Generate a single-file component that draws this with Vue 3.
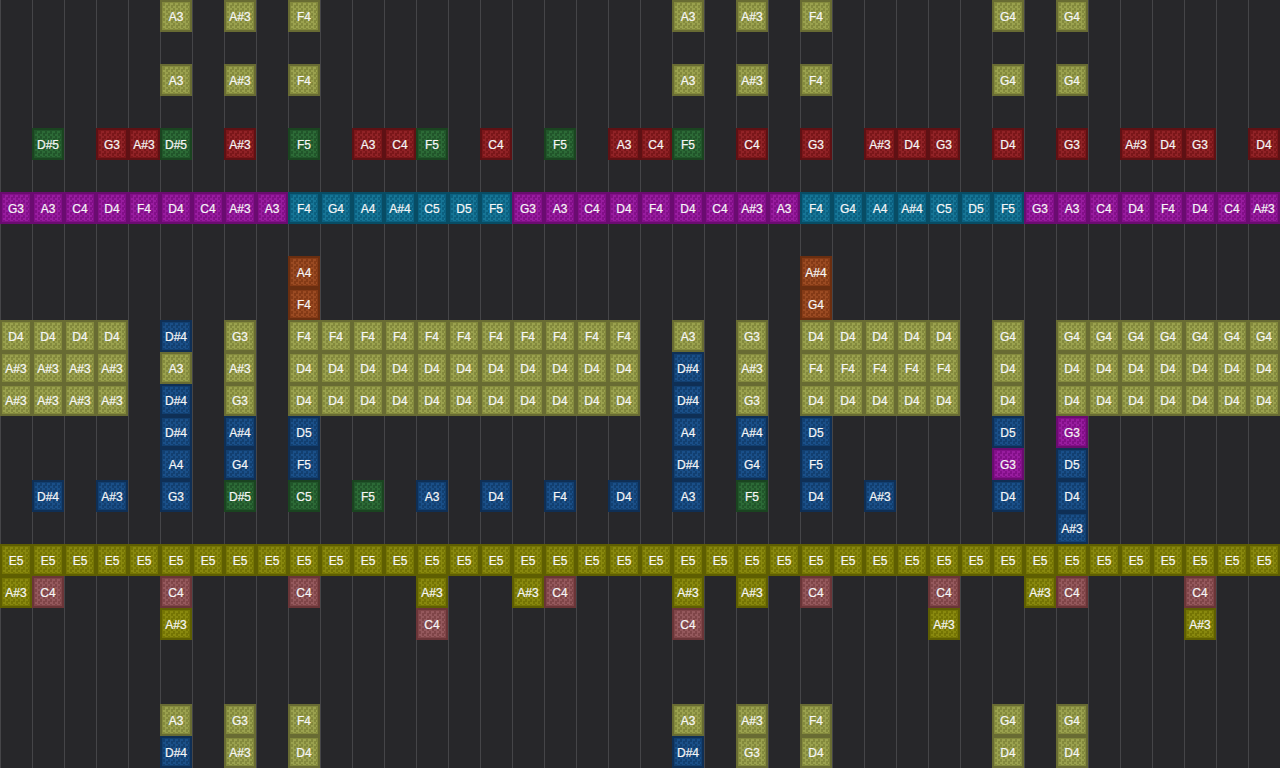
<script setup>
const olive = 'olive', blue = 'blue', green = 'green', red = 'red', purple = 'purple', teal = 'teal', orange = 'orange', yellow = 'yellow', rose = 'rose'

const cols = (color, pairs) => pairs.map(([col, note]) => ({ col, note, color: color }))
const run = (color, start, notes) => notes.map((note, i) => ({ col: start + i, note, color }))
const repeat = (note, n) => Array(n).fill(note)

const phrase1 = ['G3', 'A3', 'C4', 'D4', 'F4', 'D4', 'C4', 'A#3', 'A3']
const phrase2 = ['F4', 'G4', 'A4', 'A#4', 'C5', 'D5', 'F5']

const topRow = cols(olive, [[5, 'A3'], [7, 'A#3'], [9, 'F4'], [21, 'A3'], [23, 'A#3'], [25, 'F4'], [31, 'G4'], [33, 'G4']])

const rowData = {
  0: topRow,
  2: topRow,
  4: [
    ...cols(green, [[1, 'D#5'], [5, 'D#5'], [9, 'F5'], [13, 'F5'], [17, 'F5'], [21, 'F5']]),
    ...cols(red, [[3, 'G3'], [4, 'A#3'], [7, 'A#3'], [11, 'A3'], [12, 'C4'], [15, 'C4'], [19, 'A3'], [20, 'C4'], [23, 'C4'], [25, 'G3'], [27, 'A#3'], [28, 'D4'], [29, 'G3'], [31, 'D4'], [33, 'G3'], [35, 'A#3'], [36, 'D4'], [37, 'G3'], [39, 'D4']])
  ],
  6: [
    ...run(purple, 0, phrase1), ...run(teal, 9, phrase2),
    ...run(purple, 16, phrase1), ...run(teal, 25, phrase2),
    ...run(purple, 32, phrase1.slice(0, 8))
  ],
  8: cols(orange, [[9, 'A4'], [25, 'A#4']]),
  9: cols(orange, [[9, 'F4'], [25, 'G4']]),
  10: [
    ...run(olive, 0, repeat('D4', 4)), ...cols(blue, [[5, 'D#4']]), ...cols(olive, [[7, 'G3']]),
    ...run(olive, 9, repeat('F4', 11)), ...cols(olive, [[21, 'A3'], [23, 'G3']]),
    ...run(olive, 25, repeat('D4', 5)), ...cols(olive, [[31, 'G4']]), ...run(olive, 33, repeat('G4', 7))
  ],
  11: [
    ...run(olive, 0, repeat('A#3', 4)), ...cols(olive, [[5, 'A3'], [7, 'A#3']]),
    ...run(olive, 9, repeat('D4', 11)), ...cols(blue, [[21, 'D#4']]), ...cols(olive, [[23, 'A#3']]),
    ...run(olive, 25, repeat('F4', 5)), ...cols(olive, [[31, 'D4']]), ...run(olive, 33, repeat('D4', 7))
  ],
  12: [
    ...run(olive, 0, repeat('A#3', 4)), ...cols(blue, [[5, 'D#4']]), ...cols(olive, [[7, 'G3']]),
    ...run(olive, 9, repeat('D4', 11)), ...cols(blue, [[21, 'D#4']]), ...cols(olive, [[23, 'G3']]),
    ...run(olive, 25, repeat('D4', 5)), ...cols(olive, [[31, 'D4']]), ...run(olive, 33, repeat('D4', 7))
  ],
  13: [...cols(blue, [[5, 'D#4'], [7, 'A#4'], [9, 'D5'], [21, 'A4'], [23, 'A#4'], [25, 'D5'], [31, 'D5']]), ...cols(purple, [[33, 'G3']])],
  14: [...cols(blue, [[5, 'A4'], [7, 'G4'], [9, 'F5'], [21, 'D#4'], [23, 'G4'], [25, 'F5'], [33, 'D5']]), ...cols(purple, [[31, 'G3']])],
  15: [
    ...cols(blue, [[1, 'D#4'], [3, 'A#3'], [5, 'G3'], [13, 'A3'], [15, 'D4'], [17, 'F4'], [19, 'D4'], [21, 'A3'], [25, 'D4'], [27, 'A#3'], [31, 'D4'], [33, 'D4']]),
    ...cols(green, [[7, 'D#5'], [9, 'C5'], [11, 'F5'], [23, 'F5']])
  ],
  16: cols(blue, [[33, 'A#3']]),
  17: run(yellow, 0, repeat('E5', 40)),
  18: [
    ...cols(yellow, [[0, 'A#3'], [13, 'A#3'], [16, 'A#3'], [21, 'A#3'], [23, 'A#3'], [32, 'A#3']]),
    ...cols(rose, [[1, 'C4'], [5, 'C4'], [9, 'C4'], [17, 'C4'], [25, 'C4'], [29, 'C4'], [33, 'C4'], [37, 'C4']])
  ],
  19: [...cols(yellow, [[5, 'A#3'], [29, 'A#3'], [37, 'A#3']]), ...cols(rose, [[13, 'C4'], [21, 'C4']])],
  22: cols(olive, [[5, 'A3'], [7, 'G3'], [9, 'F4'], [21, 'A3'], [23, 'A#3'], [25, 'F4'], [31, 'G4'], [33, 'G4']]),
  23: [...cols(blue, [[5, 'D#4'], [21, 'D#4']]), ...cols(olive, [[7, 'A#3'], [9, 'D4'], [23, 'G3'], [25, 'D4'], [31, 'D4'], [33, 'D4']])]
}

const rows = Array.from({ length: 24 }, (_, i) => rowData[i] || [])
</script>

<template>
  <div class="roll">
    <div v-for="(row, r) in rows" :key="r" class="row">
      <div
        v-for="tile in row"
        :key="tile.col"
        class="tile"
        :class="tile.color"
        :style="{ gridColumnStart: tile.col + 1 }"
      >{{ tile.note }}</div>
    </div>
  </div>
</template>

<style>
html, body { background: #27272a; overflow: hidden; }
</style>

<style scoped>
.roll {
  width: 1280px;
  height: 768px;
  overflow: hidden;
  background-color: #27272a;
  background-image: linear-gradient(90deg, #454548 1px, transparent 1px);
  background-size: 32px 32px;
}
.row {
  display: grid;
  grid-template-columns: repeat(40, 32px);
  height: 32px;
}
.tile {
  grid-row: 1;
  width: 32px;
  height: 32px;
  box-sizing: border-box;
  border: 2px solid var(--edge);
  box-shadow: inset 0 0 0 1px var(--base);
  background-color: var(--base);
  background-image: repeating-conic-gradient(var(--check) 0 25%, transparent 0 50%);
  background-size: 5px 5px;
  background-position: 1px 1px;
  background-clip: padding-box;
  display: flex;
  align-items: center;
  justify-content: center;
  padding-top: 1px;
  color: #f6f6f6;
  font: 12px/1 "Liberation Sans", Arial, sans-serif;
  -webkit-text-stroke: 0.2px #f6f6f6;
  white-space: nowrap;
}
.olive { --edge: #686b33; --base: #83893d; --check: #9aa14e; }
.blue { --edge: #0f2f55; --base: #123f70; --check: #1a4f88; }
.green { --edge: #1a4420; --base: #21552a; --check: #2c6a36; }
.red { --edge: #5e1114; --base: #7a1619; --check: #902226; }
.purple { --edge: #6a0c70; --base: #820f88; --check: #981c9f; }
.teal { --edge: #084c64; --base: #0b6080; --check: #167596; }
.orange { --edge: #6a2e10; --base: #843a16; --check: #9a4a22; }
.yellow { --edge: #5e5e02; --base: #747404; --check: #88880e; }
.rose { --edge: #6a3538; --base: #7f4548; --check: #94585c; }
</style>
